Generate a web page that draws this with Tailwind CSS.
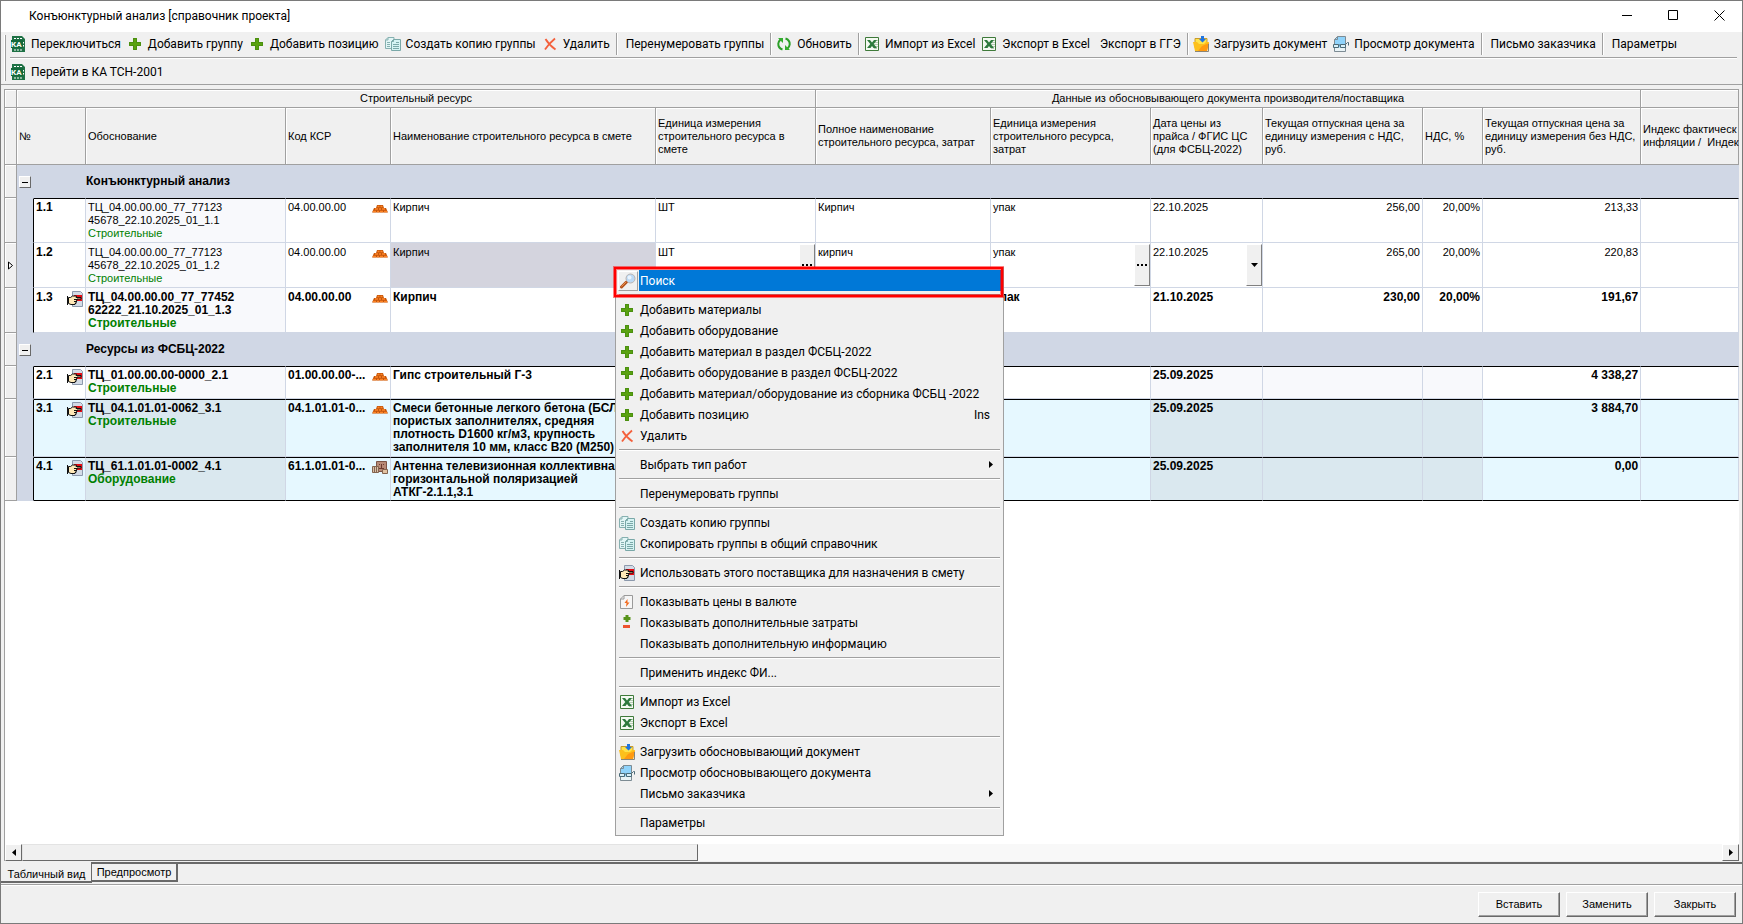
<!DOCTYPE html>
<html lang="ru" class="h-full">
  <head>
    <meta charset="UTF-8" />
    <meta name="viewport" content="width=device-width, initial-scale=1" />
    <title>Конъюнктурный анализ</title>
    <script src="https://cdn.jsdelivr.net/npm/@tailwindcss/browser@4"></script>
  </head>
  <body
    class="relative h-screen overflow-hidden flex flex-col border border-[#7a7a7a] bg-[#f0f0f0] text-black text-[12px] leading-4 font-[Roboto,'Noto_Sans',sans-serif]"
  >
    <!-- icons -->
    <svg class="hidden">
      <symbol id="i-ka" viewBox="0 0 16 16">
        <path d="M2 0h10l3 3v13H2z" fill="#1e7145" />
        <path d="M4 2.500h2M7 2.500h2M10 2.500h2M4 14h2M7 14h2M10 14h2" stroke="#fff" />
        <path d="M1 4h12v8H1z" fill="#14693b" />
        <text x="1" y="11" font-size="8" font-weight="bold" fill="#fff">КА</text>
        <path d="M13.500 6v1.500M13.500 9v1.500" stroke="#fff" />
      </symbol>
      <symbol id="i-plus" viewBox="0 0 16 16">
        <path d="M6 2h4v4h4v4h-4v4H6v-4H2V6h4z" fill="#5aa211" />
        <path d="M6.500 2.500h3v4h4v3h-4v4h-3v-4h-4v-3h4z" fill="none" stroke="#4a8f10" />
      </symbol>
      <symbol id="i-copy" viewBox="0 0 16 16">
        <path d="M3 1.500h6v11H.500V4z" fill="#e2f6f6" stroke="#86b0b0" />
        <path d="M3 1.500V4H.500M2 6.500h3M2 8.500h3M2 10.500h3" fill="none" stroke="#86b0b0" />
        <path d="M8.500 3.500h7v11h-9v-9z" fill="#d5f3f3" stroke="#7aa8a8" />
        <path d="M8.500 3.500v2h-2M8 8.500h6M8 10.500h6M8 12.500h6M11 6.500h3" fill="none" stroke="#7aa8a8" />
      </symbol>
      <symbol id="i-del" viewBox="0 0 16 16">
        <path d="M3.500 3Q7 9 13.500 13.500M13 2.500Q6.500 8 3 13.500" fill="none" stroke="#f4603c" stroke-width="1.800" />
      </symbol>
      <symbol id="i-refresh" viewBox="0 0 16 16">
        <path d="M6.500 13.500Q2 12 2.300 7.500Q2.500 5.500 4.500 3.500M9.500 2.500Q14 4 13.700 8.500Q13.500 10.500 11.500 12.500" fill="none" stroke="#2c9f28" stroke-width="2" />
        <path d="M2 2h5v5zM14 14H9V9z" fill="#35ad2f" />
      </symbol>
      <symbol id="i-excel" viewBox="0 0 16 16">
        <path d="M1.500 1.500h13v13h-13z" fill="#f4faf2" stroke="#3f7a3a" />
        <path d="M10 4.500h4M10 6.500h4M10 8.500h4M10 10.500h4M10 12.500h3" stroke="#b6c9b4" />
        <path d="M3 4h3l2 2.500L10 4h3L9.700 8l3.300 4H9.500L8 10l-1.500 2H3l3.300-4z" fill="#2d7a3c" />
      </symbol>
      <symbol id="i-load" viewBox="0 0 16 16">
        <path d="M2 2.500h12v9H2z" fill="#ffe34a" stroke="#c79a2c" />
        <path d="M0 6h4l2 2h5l2-2h3l-2 9H2z" fill="#fdc01c" />
        <path d="M5 15l4-5 7-3-2 8z" fill="#ff9a10" />
        <path d="M2 15.500h13.500V8" stroke="#8a8474" fill="none" />
        <path d="M8 0h3v3h2L9.500 6.500 6 3h2z" fill="#1f74e0" />
      </symbol>
      <symbol id="i-view" viewBox="0 0 16 16">
        <path d="M4.500.500h8v15h-11V3.500z" fill="#8fd3fb" stroke="#7d8b93" />
        <path d="M2 11.500h10v3.500H2z" fill="#e9f3f6" />
        <path d="M1.500 3.500h3v-3" fill="none" stroke="#7d8b93" />
        <path d="M.500 8.500h5v3h-5zM7.500 8.500h5v3h-5z" fill="#d9f1fa" stroke="#4c6b78" />
        <path d="M5.500 9h2M12.500 8.500l2-2h1v3" fill="none" stroke="#4c6b78" />
      </symbol>
      <symbol id="i-brick" viewBox="0 0 16 16">
        <path d="M5 4h6l1 3h2l2 4.500H0L2 7h2z" fill="#c4560c" />
        <path d="M5.500 5.500h2M8.500 5.500h2M3 8h3M7 8h2M10 8h3M1 10.500h3M5 10.500h2M8 10.500h3M12 10.500h3" stroke="#ff8424" stroke-width="1.500" />
      </symbol>
      <symbol id="i-box" viewBox="0 0 16 16">
        <path d="M4.500 1.500h10v10h-10z" fill="#b78a76" stroke="#7c5546" />
        <path d="M7 4.500h1M11 4.500h1M9.500 4v4M7 8.500h5" stroke="#6d3b30" />
        <path d="M.500 6.500h6v6h-6z" fill="#d9c0a8" stroke="#84644f" />
        <path d="M2.500 7v5M4.500 7v5" stroke="#84644f" />
        <path d="M10.500 9.500h5v4h-5z" fill="#e3c3a2" stroke="#84644f" />
      </symbol>
      <symbol id="i-hand" viewBox="0 0 16 16">
        <path d="M5.500.500h8l2 2v13h-10z" fill="#d3dbe6" stroke="#8c99ac" />
        <path d="M7 4h8v6H7z" fill="#e80b12" />
        <path d="M0 5h1v9H0z" fill="#111" />
        <path d="M1.500 6.500h2l2-1.500h4l-.500 1.500h5v1.500H10v1.500H9.500v1.500H9v1.500H8v1H4l-2.500-1z" fill="#ffe9b8" stroke="#111" />
        <path d="M7 8.500h3M7 10.500h2" stroke="#111" />
      </symbol>
      <symbol id="i-price" viewBox="0 0 16 16">
        <path d="M5 1.500h8.500v13h-12V5z" fill="#f6f6f6" stroke="#9a9a9a" />
        <path d="M5 1.500V5H1.500" fill="none" stroke="#9a9a9a" />
        <path d="M8.500 5 5.500 9h2L7 13l3.500-4.500h-2z" fill="#f2691c" />
      </symbol>
      <symbol id="i-cost" viewBox="0 0 16 16">
        <path d="M6.500 0h3v2h2v3h-2v2h-3V5h-2V2h2z" fill="#57941a" />
        <path d="M4 10h7v3H4z" fill="#ee5330" />
      </symbol>
      <symbol id="i-search" viewBox="0 0 16 16">
        <path d="M1.500 14 6.500 9" stroke="#b4521b" stroke-width="3" stroke-linecap="round" />
        <path d="M1.500 13.500 6 9" stroke="#e8904c" />
        <circle cx="10.500" cy="5.500" r="4.500" fill="#bcd9f5" stroke="#b9b3b0" />
        <circle cx="9.500" cy="4.500" r="2" fill="#eaf4fe" />
      </symbol>
      <symbol id="i-dots" viewBox="0 0 10 2">
        <path d="M0 0h2v2H0zM4 0h2v2H4zM8 0h2v2H8z" />
      </symbol>
    </svg>

    <header class="flex h-[31px] shrink-0 items-center justify-between bg-white pb-[2px] pl-7">
      <h1>Конъюнктурный анализ [справочник проекта]</h1>
      <div class="flex">
        <button class="flex w-[46px] justify-center" aria-label="Свернуть">
          <svg class="size-[11px]" viewBox="0 0 11 11"><path d="M0 5.500h10" stroke="#000" /></svg>
        </button>
        <button class="flex w-[46px] justify-center" aria-label="Развернуть">
          <svg class="size-[11px]" viewBox="0 0 11 11"><path d="M.500.500h9v9h-9z" fill="none" stroke="#000" /></svg>
        </button>
        <button class="flex w-[46px] justify-center" aria-label="Закрыть окно">
          <svg class="size-[11px]" viewBox="0 0 11 11"><path d="m.500.500 10 10m0-10-10 10" stroke="#000" /></svg>
        </button>
      </div>
    </header>

    <!-- toolbar -->
    <div class="flex shrink-0 border-b border-[#a0a0a0]">
      <div class="my-[3px] ml-[3px] mr-1 w-[2px] border-r border-[#a0a0a0] bg-white"></div>
      <div class="mr-[5px] flex grow flex-col">
        <div
          class="flex h-[26px] items-center border-b border-[#a0a0a0] pb-px whitespace-nowrap [&_button]:flex [&_button]:items-center [&_button]:gap-[5px] [&_button]:pr-[6px] [&_svg]:size-4 [&_hr]:mr-1 [&_hr]:h-[22px] [&_hr]:w-[2px] [&_hr]:border-0 [&_hr]:border-l [&_hr]:border-[#a0a0a0] [&_hr]:bg-white"
        >
          <button><svg><use href="#i-ka" /></svg>Переключиться</button>
          <button><svg><use href="#i-plus" /></svg>Добавить группу</button>
          <button><svg><use href="#i-plus" /></svg>Добавить позицию</button>
          <button><svg><use href="#i-copy" /></svg>Создать копию группы</button>
          <button><svg><use href="#i-del" /></svg>Удалить</button>
          <hr />
          <button class="pl-1">Перенумеровать группы</button>
          <hr />
          <button><svg><use href="#i-refresh" /></svg>Обновить</button>
          <hr />
          <button><svg><use href="#i-excel" /></svg>Импорт из Excel</button>
          <button><svg><use href="#i-excel" /></svg>Экспорт в Excel</button>
          <button class="pl-1">Экспорт в ГГЭ</button>
          <hr />
          <button><svg><use href="#i-load" /></svg>Загрузить документ</button>
          <button><svg><use href="#i-view" /></svg>Просмотр документа</button>
          <hr />
          <button class="pl-1">Письмо заказчика</button>
          <hr />
          <button class="pl-1">Параметры</button>
        </div>
        <div class="flex h-[26px] items-center border-t border-white">
          <button class="flex items-center gap-[5px]">
            <svg class="size-4"><use href="#i-ka" /></svg>Перейти в КА ТСН-2001
          </button>
        </div>
      </div>
    </div>

    <main
      class="mt-1 ml-[3px] mr-[3px] flex min-h-0 grow flex-col overflow-hidden border-t border-l border-[#a0a0a0] bg-white font-['Liberation_Sans',Arial,sans-serif] text-[11px] leading-[13px]"
    >
      <table
        class="w-full table-fixed border-separate border-spacing-0 [&_td]:border-r [&_td]:border-b [&_td]:border-[#d0d7e5] [&_td]:px-[2px] [&_td]:pt-[2px] [&_td]:align-top [&_th]:border-r [&_th]:border-b [&_th]:border-[#a0a0a0] [&_th]:bg-[#f0f0f0] [&_th]:px-[2px] [&_th]:text-left [&_th]:font-normal [&_th]:shadow-[inset_1px_1px_0_#fff]"
      >
        <colgroup>
          <col class="w-[12px]" />
          <col class="w-[17px]" />
          <col class="w-[52px]" />
          <col class="w-[200px]" />
          <col class="w-[105px]" />
          <col class="w-[265px]" />
          <col class="w-[160px]" />
          <col class="w-[175px]" />
          <col class="w-[160px]" />
          <col class="w-[112px]" />
          <col class="w-[160px]" />
          <col class="w-[60px]" />
          <col class="w-[158px]" />
          <col />
        </colgroup>
        <thead>
          <tr class="h-[18px] [&>th]:text-center!">
            <th></th>
            <th colspan="6">Строительный ресурс</th>
            <th colspan="6">Данные из обосновывающего документа производителя/поставщика</th>
            <th></th>
          </tr>
          <tr class="h-[57px]">
            <th></th>
            <th colspan="2">№</th>
            <th>Обоснование</th>
            <th>Код КСР</th>
            <th>Наименование строительного ресурса в смете</th>
            <th>Единица измерения<br />строительного ресурса в<br />смете</th>
            <th>Полное наименование<br />строительного ресурса, затрат</th>
            <th>Единица измерения<br />строительного ресурса,<br />затрат</th>
            <th>Дата цены из<br />прайса / ФГИС ЦС<br />(для ФСБЦ-2022)</th>
            <th>Текущая отпускная цена за<br />единицу измерения с НДС,<br />руб.</th>
            <th>НДС, %</th>
            <th class="whitespace-nowrap">Текущая отпускная цена за<br />единицу измерения без НДС,<br />руб.</th>
            <th class="whitespace-nowrap">Индекс фактическ<br />инфляции /&nbsp; Индек</th>
          </tr>
        </thead>
        <tbody>
          <tr class="h-[33px] bg-[#d0d7e5] text-[12px] font-bold">
            <th></th>
            <td class="align-middle!">
              <button class="flex size-3 items-center justify-center border border-t-white border-l-white border-r-[#696969] border-b-[#696969] bg-[#f0f0f0]" aria-label="Свернуть группу">
                <span class="h-px w-[6px] bg-black"></span>
              </button>
            </td>
            <td class="border-r-0!"></td>
            <td colspan="11" class="px-0! pt-0! align-middle!">Конъюнктурный анализ</td>
          </tr>
          <tr class="h-[45px] [&>td]:border-t [&>td]:border-t-black">
            <th></th>
            <td class="border-t-[#d0d7e5]! border-r-black! bg-[#d0d7e5]"></td>
            <td class="text-[12px] font-bold">1.1</td>
            <td class="bg-[#f8f9fc]">ТЦ_04.00.00.00_77_77123<br />45678_22.10.2025_01_1.1<br /><span class="text-[#008000]">Строительные</span></td>
            <td><div class="flex justify-between">04.00.00.00<svg class="size-4"><use href="#i-brick" /></svg></div></td>
            <td>Кирпич</td>
            <td>ШТ</td>
            <td>Кирпич</td>
            <td>упак</td>
            <td>22.10.2025</td>
            <td class="text-right">256,00</td>
            <td class="text-right">20,00%</td>
            <td class="text-right">213,33</td>
            <td></td>
          </tr>
          <tr class="h-[45px] [&>td]:pt-[3px]">
            <th class="px-0! text-center!">
              <svg class="mx-auto h-[9px] w-[7px]" viewBox="0 0 7 9"><path d="M1.500 1v7l4-3.500z" fill="#fff" stroke="#000" /></svg>
            </th>
            <td class="border-r-black! bg-[#d0d7e5]"></td>
            <td class="text-[12px] font-bold">1.2</td>
            <td class="bg-[#f8f9fc]">ТЦ_04.00.00.00_77_77123<br />45678_22.10.2025_01_1.2<br /><span class="text-[#008000]">Строительные</span></td>
            <td><div class="flex justify-between">04.00.00.00<svg class="size-4"><use href="#i-brick" /></svg></div></td>
            <td class="bg-[#d4d4de]">Кирпич</td>
            <td class="pt-px! pr-0!">
              <div class="flex justify-between">
                <span class="pt-[2px]">ШТ</span>
                <button class="flex h-[42px] w-4 items-center justify-center border border-t-white border-l-white border-r-[#808080] border-b-[#808080] bg-[#f0f0f0]" aria-label="Выбрать единицу">
                  <svg class="h-[2px] w-[10px]"><use href="#i-dots" /></svg>
                </button>
              </div>
            </td>
            <td>кирпич</td>
            <td class="pt-px! pr-0!">
              <div class="flex justify-between">
                <span class="pt-[2px]">упак</span>
                <button class="flex h-[42px] w-4 items-center justify-center border border-t-white border-l-white border-r-[#808080] border-b-[#808080] bg-[#f0f0f0]" aria-label="Выбрать единицу">
                  <svg class="h-[2px] w-[10px]"><use href="#i-dots" /></svg>
                </button>
              </div>
            </td>
            <td class="pt-px! pr-0!">
              <div class="flex justify-between">
                <span class="pt-[2px]">22.10.2025</span>
                <button class="flex h-[42px] w-4 items-center justify-center border border-t-white border-l-white border-r-[#808080] border-b-[#808080] bg-[#f0f0f0]" aria-label="Выбрать дату">
                  <svg class="h-1 w-[7px]" viewBox="0 0 7 4"><path d="M0 0h7L3.500 4z" /></svg>
                </button>
              </div>
            </td>
            <td class="text-right">265,00</td>
            <td class="text-right">20,00%</td>
            <td class="text-right">220,83</td>
            <td></td>
          </tr>
          <tr class="h-[45px] text-[12px] font-bold [&>td]:pt-[3px]">
            <th></th>
            <td class="border-r-black! bg-[#d0d7e5]"></td>
            <td><div class="flex justify-between">1.3<svg class="size-4"><use href="#i-hand" /></svg></div></td>
            <td class="bg-[#f8f9fc]">ТЦ_04.00.00.00_77_77452<br />62222_21.10.2025_01_1.3<br /><span class="text-[#008000]">Строительные</span></td>
            <td><div class="flex justify-between">04.00.00.00<svg class="size-4"><use href="#i-brick" /></svg></div></td>
            <td>Кирпич</td>
            <td></td>
            <td></td>
            <td>упак</td>
            <td>21.10.2025</td>
            <td class="text-right">230,00</td>
            <td class="text-right">20,00%</td>
            <td class="text-right">191,67</td>
            <td></td>
          </tr>
          <tr class="h-[33px] bg-[#d0d7e5] text-[12px] font-bold">
            <th></th>
            <td class="align-middle!">
              <button class="flex size-3 items-center justify-center border border-t-white border-l-white border-r-[#696969] border-b-[#696969] bg-[#f0f0f0]" aria-label="Свернуть группу">
                <span class="h-px w-[6px] bg-black"></span>
              </button>
            </td>
            <td class="border-r-0!"></td>
            <td colspan="11" class="px-0! pt-0! align-middle!">Ресурсы из ФСБЦ-2022</td>
          </tr>
          <tr class="h-[33px] text-[12px] font-bold [&>td]:border-t [&>td]:border-t-black">
            <th></th>
            <td class="border-t-[#d0d7e5]! border-r-black! bg-[#d0d7e5]"></td>
            <td><div class="flex justify-between">2.1<svg class="size-4"><use href="#i-hand" /></svg></div></td>
            <td class="bg-[#f8f9fc]">ТЦ_01.00.00.00-0000_2.1<br /><span class="text-[#008000]">Строительные</span></td>
            <td><div class="flex justify-between">01.00.00.00-...<svg class="size-4 shrink-0"><use href="#i-brick" /></svg></div></td>
            <td>Гипс строительный Г-3</td>
            <td></td>
            <td></td>
            <td></td>
            <td class="bg-[#f8f9fc]">25.09.2025</td>
            <td class="bg-[#f8f9fc]"></td>
            <td class="bg-[#f8f9fc]"></td>
            <td class="text-right">4 338,27</td>
            <td></td>
          </tr>
          <tr class="h-[58px] bg-[#e6f8ff] text-[12px] font-bold [&>td]:border-t [&>td]:border-t-black">
            <th></th>
            <td class="border-t-[#d0d7e5]! border-r-black! bg-[#d0d7e5]"></td>
            <td><div class="flex justify-between">3.1<svg class="size-4"><use href="#i-hand" /></svg></div></td>
            <td class="bg-[#dae8ef]">ТЦ_04.1.01.01-0062_3.1<br /><span class="text-[#008000]">Строительные</span></td>
            <td><div class="flex justify-between">04.1.01.01-0...<svg class="size-4 shrink-0"><use href="#i-brick" /></svg></div></td>
            <td class="whitespace-nowrap">Смеси бетонные легкого бетона (БСЛ)<br />пористых заполнителях, средняя<br />плотность D1600 кг/м3, крупность<br />заполнителя 10 мм, класс В20 (М250)</td>
            <td></td>
            <td></td>
            <td></td>
            <td class="bg-[#dae8ef]">25.09.2025</td>
            <td class="bg-[#dae8ef]"></td>
            <td class="bg-[#dae8ef]"></td>
            <td class="text-right">3 884,70</td>
            <td></td>
          </tr>
          <tr class="h-[44px] bg-[#e6f8ff] text-[12px] font-bold [&>td]:border-t [&>td]:border-t-black [&>td]:border-b-black">
            <th></th>
            <td class="border-y-[#d0d7e5]! border-r-black! bg-[#d0d7e5]"></td>
            <td><div class="flex justify-between">4.1<svg class="size-4"><use href="#i-hand" /></svg></div></td>
            <td class="bg-[#dae8ef]">ТЦ_61.1.01.01-0002_4.1<br /><span class="text-[#008000]">Оборудование</span></td>
            <td><div class="flex justify-between">61.1.01.01-0...<svg class="size-4 shrink-0"><use href="#i-box" /></svg></div></td>
            <td class="whitespace-nowrap">Антенна телевизионная коллективная<br />горизонтальной поляризацией<br />АТКГ-2.1.1,3.1</td>
            <td></td>
            <td></td>
            <td></td>
            <td class="bg-[#dae8ef]">25.09.2025</td>
            <td class="bg-[#dae8ef]"></td>
            <td class="bg-[#dae8ef]"></td>
            <td class="text-right">0,00</td>
            <td></td>
          </tr>
        </tbody>
      </table>

      <!-- horizontal scrollbar -->
      <div class="mt-auto flex h-[17px] shrink-0 bg-[#f8f8f8]">
        <button class="flex w-[17px] items-center justify-center border border-t-white border-l-white border-r-[#696969] border-b-[#696969] bg-[#f0f0f0]" aria-label="Влево">
          <svg class="h-[7px] w-1" viewBox="0 0 4 7"><path d="M4 0v7L0 3.500z" /></svg>
        </button>
        <div class="w-[39%] border border-t-[#e3e3e3] border-l-[#e3e3e3] border-r-[#696969] border-b-[#696969] bg-[#f0f0f0]"></div>
        <button class="ml-auto flex w-[17px] items-center justify-center border border-t-white border-l-white border-r-[#696969] border-b-[#696969] bg-[#f0f0f0]" aria-label="Вправо">
          <svg class="h-[7px] w-1" viewBox="0 0 4 7"><path d="M0 0v7l4-3.500z" /></svg>
        </button>
      </div>
    </main>

    <!-- sheet tabs -->
    <div class="mt-px flex h-[22px] shrink-0 items-start font-['Liberation_Sans',Arial,sans-serif] text-[11px] leading-[13px]">
      <button class="h-[21px] w-[91px] border-r border-b-2 border-[#696969] pt-[5px] pl-px">Табличный вид</button>
      <div class="h-5 grow border-t-2 border-[#696969]">
        <button class="h-[18px] w-[86px] border-r-2 border-b-2 border-[#696969]">Предпросмотр</button>
      </div>
    </div>

    <footer
      class="flex h-[39px] shrink-0 items-center justify-end gap-[6px] border-t border-[#a0a0a0] pr-[6px] font-['Liberation_Sans',Arial,sans-serif] text-[11px] shadow-[inset_0_1px_0_#fff] [&>button]:h-[25px] [&>button]:w-[82px] [&>button]:border [&>button]:border-t-white [&>button]:border-l-white [&>button]:border-r-[#696969] [&>button]:border-b-[#696969] [&>button]:shadow-[inset_-1px_-1px_0_#a0a0a0]"
    >
      <button>Вставить</button>
      <button>Заменить</button>
      <button>Закрыть</button>
    </footer>

    <!-- context menu -->
    <div
      class="absolute top-[266px] left-[614px] flex w-[389px] flex-col border border-[#a0a0a0] bg-[#f0f0f0] p-[2px] [&>button]:flex [&>button]:h-[21px] [&>button]:shrink-0 [&>button]:items-center [&>button]:gap-[5px] [&>button]:pl-px [&>button]:text-left [&_i]:size-4 [&_svg]:size-4 [&>hr]:mx-px [&>hr]:my-[3px] [&>hr]:h-[2px] [&>hr]:border-0 [&>hr]:border-t [&>hr]:border-[#a0a0a0] [&>hr]:bg-white"
    >
      <button class="gap-0! pl-0!">
        <span class="border border-t-white border-l-white border-r-[#a0a0a0] border-b-[#a0a0a0] p-px"><svg><use href="#i-search" /></svg></span>
        <span class="ml-px flex h-[21px] grow items-center bg-[#0078d7] pl-px text-white">Поиск</span>
      </button>
      <hr />
      <button><svg><use href="#i-plus" /></svg>Добавить материалы</button>
      <button><svg><use href="#i-plus" /></svg>Добавить оборудование</button>
      <button><svg><use href="#i-plus" /></svg>Добавить материал в раздел ФСБЦ-2022</button>
      <button><svg><use href="#i-plus" /></svg>Добавить оборудование в раздел ФСБЦ-2022</button>
      <button><svg><use href="#i-plus" /></svg>Добавить материал/оборудование из сборника ФСБЦ -2022</button>
      <button><svg><use href="#i-plus" /></svg>Добавить позицию<span class="ml-auto pr-[11px]">Ins</span></button>
      <button><svg><use href="#i-del" /></svg>Удалить</button>
      <hr />
      <button><i></i>Выбрать тип работ<b class="ml-auto pr-2"><svg class="h-[7px]! w-1!" viewBox="0 0 4 7"><path d="M0 0v7l4-3.500z" /></svg></b></button>
      <hr />
      <button><i></i>Перенумеровать группы</button>
      <hr />
      <button><svg><use href="#i-copy" /></svg>Создать копию группы</button>
      <button><svg><use href="#i-copy" /></svg>Скопировать группы в общий справочник</button>
      <hr />
      <button><svg><use href="#i-hand" /></svg>Использовать этого поставщика для назначения в смету</button>
      <hr />
      <button><svg><use href="#i-price" /></svg>Показывать цены в валюте</button>
      <button><svg><use href="#i-cost" /></svg>Показывать дополнительные затраты</button>
      <button><i></i>Показывать дополнительную информацию</button>
      <hr />
      <button><i></i>Применить индекс ФИ...</button>
      <hr />
      <button><svg><use href="#i-excel" /></svg>Импорт из Excel</button>
      <button><svg><use href="#i-excel" /></svg>Экспорт в Excel</button>
      <hr />
      <button><svg><use href="#i-load" /></svg>Загрузить обосновывающий документ</button>
      <button><svg><use href="#i-view" /></svg>Просмотр обосновывающего документа</button>
      <button><i></i>Письмо заказчика<b class="ml-auto pr-2"><svg class="h-[7px]! w-1!" viewBox="0 0 4 7"><path d="M0 0v7l4-3.500z" /></svg></b></button>
      <hr />
      <button><i></i>Параметры</button>
      <div class="pointer-events-none absolute -top-px -left-[2px] h-[30px] w-[389px] border-2 border-[#ff0000] shadow-[0_0_0_1px_#ff000080,inset_0_0_0_1px_#ff000080]"></div>
    </div>
  </body>
</html>
